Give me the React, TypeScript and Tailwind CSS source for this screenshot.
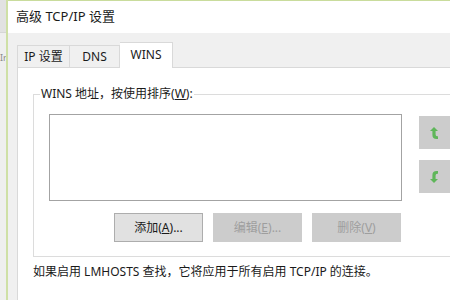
const font = "font-['Segoe_UI','Noto_Sans','Noto_Sans_CJK_SC',sans-serif]";

const MoveIcon = ({ down = false }: { down?: boolean }) => (
  <svg width="8" height="12" viewBox="0 0 8 12" className={down ? "-scale-y-100" : ""}>
    <path
      d="M4 0 L8 4 H5.6 V7.6 Q5.6 9.3 7.2 9.3 H8 V12 H6.6 Q2.4 12 2.4 8 V4 H0 Z"
      fill="#5fb65a"
    />
  </svg>
);

const Button = ({ label, hotkey, suffix, disabled }: { label: string; hotkey: string; suffix: string; disabled?: boolean }) => (
  <div
    className={
      "flex h-[29px] w-[89px] items-center justify-center border text-[12px] " +
      (disabled ? "border-[#cccccc] bg-[#cccccc] text-[#9e9e9e]" : "border-[#adadad] bg-[#e1e1e1] text-[#1a1a1a]")
    }
  >
    {label}(<span className="underline">{hotkey}</span>){suffix}
  </div>
);

export default function App() {
  return (
    <div className={`flex h-[300px] w-[450px] overflow-hidden bg-white ${font}`}>
      {/* background window peeking through */}
      <div className="flex w-[6px] shrink-0 flex-col overflow-hidden bg-[#efefef]">
        <div className="h-[33px] border-b border-[#d6d6d6] bg-[#e2e2e2]" />
        <div className="mt-[20px] text-[9px] leading-[10px] text-[#8a8a8a]">Ir</div>
      </div>
      <div className="w-[2px] shrink-0 bg-[#cfe0a6]" />

      {/* dialog */}
      <div className="flex min-w-0 flex-1 flex-col border-t border-[#c9dc9c] bg-[#f0f0f0]">
        <div className="flex h-[32px] shrink-0 items-center bg-white pl-[8px] text-[13px] text-[#1a1a1a]">
          高级 TCP/IP 设置
        </div>

        {/* tabs */}
        <div className="flex h-[34px] shrink-0 items-end pl-[9px] text-[12px] text-[#1a1a1a]">
          <div className="flex h-[22px] w-[53px] items-center justify-center border border-b-0 border-[#d9d9d9]">
            IP 设置
          </div>
          <div className="flex h-[22px] w-[50px] items-center justify-center border border-b-0 border-l-0 border-[#d9d9d9]">
            DNS
          </div>
          <div className="relative -mb-px flex h-[26px] w-[53px] items-center justify-center border border-b-0 border-l-0 border-[#d9d9d9] bg-white pb-[2px]">
            WINS
          </div>
        </div>

        {/* tab page */}
        <div className="ml-[9px] flex flex-1 flex-col border-l border-t border-[#d9d9d9] bg-white">
          <div className="relative ml-[15px] mt-[26px] w-[440px] shrink-0 border border-[#dcdcdc] pb-[14px] pl-[15px] pt-[19px]">
            <div className="absolute -top-[9px] left-[6px] bg-white px-[1px] text-[12px] leading-[16px] text-[#1a1a1a]">
              WINS 地址，按使用排序(<span className="underline">W</span>):
            </div>
            <div className="flex">
              <div className="h-[87px] w-[353px] border border-[#a3a3a3] bg-white" />
              <div className="ml-[17px] mt-[2px] flex flex-col gap-[11px]">
                <div className="flex h-[33px] w-[34px] items-center bg-[#cccccc] pl-[11px]">
                  <MoveIcon />
                </div>
                <div className="flex h-[33px] w-[34px] items-center bg-[#cccccc] pl-[11px]">
                  <MoveIcon down />
                </div>
              </div>
            </div>
            <div className="ml-[65px] mt-[12px] flex gap-[10px]">
              <Button label="添加" hotkey="A" suffix="..." />
              <Button label="编辑" hotkey="E" suffix="..." disabled />
              <Button label="删除" hotkey="V" suffix="" disabled />
            </div>
          </div>
          <div className="ml-[15px] mt-[7px] whitespace-nowrap text-[12px] leading-[16px] text-[#1a1a1a]">
            如果启用 LMHOSTS 查找，它将应用于所有启用 TCP/IP 的连接。
          </div>
        </div>
      </div>
    </div>
  );
}
